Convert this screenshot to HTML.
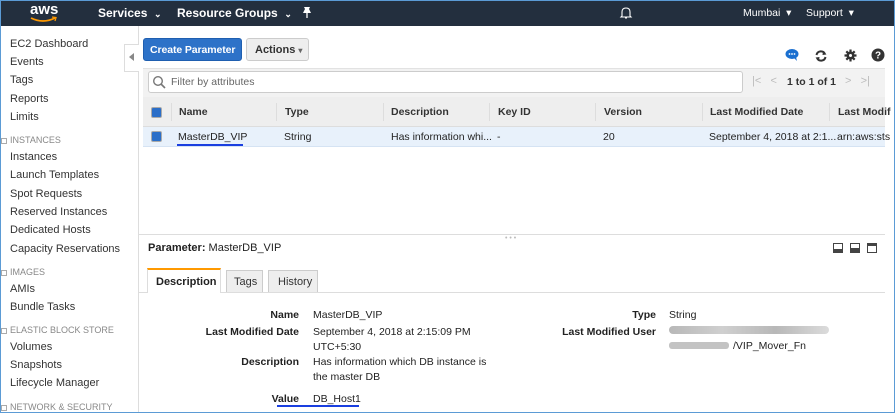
<!DOCTYPE html>
<html><head><meta charset="utf-8"><style>
*{box-sizing:border-box;margin:0;padding:0}
body{width:895px;height:413px;overflow:hidden;background:#fff;font-family:"Liberation Sans",Arial,sans-serif;font-size:11px;color:#222;position:relative}
.a{position:absolute;white-space:nowrap}
.frame{position:absolute;left:0;top:0;width:895px;height:413px;border:1px solid #5b9bd5;pointer-events:none}
.nav{left:0;top:0;width:895px;height:26px;background:#232f3e}
.nt{color:#fff;font-weight:bold;font-size:12px}
.sb{left:10px;font-size:11px;color:#333}
.sh{left:10px;font-size:9px;color:#888}
.sq{left:1px;width:6px;height:6px;border:1px solid #aaa;background:#fff}
.th{font-weight:bold;font-size:10.5px;color:#333}
.sep{width:1px;height:18px;background:#ddd;top:103px}
.lbl{font-weight:bold;text-align:right;font-size:10.5px}
.val{font-size:10.5px}
</style></head><body>
<div class="a nav"></div>
<div class="a" style="left:30px;top:1px;color:#fff;font-size:15px;font-weight:bold">aws</div>
<svg class="a" style="left:29px;top:15px" width="30" height="8"><path d="M2 3 Q14 9 26 3" stroke="#f90" stroke-width="1.8" fill="none"/><path d="M23 2 L27 2.5 L26 6" stroke="#f90" stroke-width="1.3" fill="none"/></svg>
<div class="a nt" style="left:98px;top:6px">Services&nbsp; <span style="font-size:9px">⌄</span></div>
<div class="a nt" style="left:177px;top:6px">Resource Groups&nbsp; <span style="font-size:9px">⌄</span></div>
<svg class="a" style="left:301px;top:6px" width="12" height="13"><path d="M3 1 L9 1 L8 3 L10 7 L2 7 L4 3 Z" fill="#fff"/><path d="M6 7 L6 12" stroke="#fff" stroke-width="1.3"/></svg>
<svg class="a" style="left:619px;top:6px" width="14" height="14"><path d="M3 10 L3 6 Q3 2 7 2 Q11 2 11 6 L11 10 L12 11 L2 11 Z M6 12 L8 12" stroke="#fff" fill="none" stroke-width="1.1"/></svg>
<div class="a" style="left:743px;top:7px;color:#fff;font-size:10.5px">Mumbai &nbsp;▾</div>
<div class="a" style="left:806px;top:7px;color:#fff;font-size:10.5px">Support &nbsp;▾</div>

<div class="a" style="left:138px;top:26px;width:1px;height:387px;background:#ddd"></div>
<div class="a" style="left:124px;top:44px;width:15px;height:28px;background:#fff;border:1px solid #ddd;border-right:none"></div>
<div class="a" style="left:129px;top:53px;width:0;height:0;border-top:4px solid transparent;border-bottom:4px solid transparent;border-right:5px solid #888"></div>

<div class="a sb" style="top:38px">EC2 Dashboard</div>
<div class="a sb" style="top:56px">Events</div>
<div class="a sb" style="top:74px">Tags</div>
<div class="a sb" style="top:93px">Reports</div>
<div class="a sb" style="top:111px">Limits</div>
<div class="a sq" style="top:138px"></div><div class="a sh" style="top:135px">INSTANCES</div>
<div class="a sb" style="top:151px">Instances</div>
<div class="a sb" style="top:169px">Launch Templates</div>
<div class="a sb" style="top:188px">Spot Requests</div>
<div class="a sb" style="top:206px">Reserved Instances</div>
<div class="a sb" style="top:224px">Dedicated Hosts</div>
<div class="a sb" style="top:243px">Capacity Reservations</div>
<div class="a sq" style="top:270px"></div><div class="a sh" style="top:267px">IMAGES</div>
<div class="a sb" style="top:283px">AMIs</div>
<div class="a sb" style="top:301px">Bundle Tasks</div>
<div class="a sq" style="top:328px"></div><div class="a sh" style="top:325px">ELASTIC BLOCK STORE</div>
<div class="a sb" style="top:341px">Volumes</div>
<div class="a sb" style="top:359px">Snapshots</div>
<div class="a sb" style="top:377px">Lifecycle Manager</div>
<div class="a sq" style="top:405px"></div><div class="a sh" style="top:402px">NETWORK &amp; SECURITY</div>

<div class="a" style="left:143px;top:38px;width:99px;height:23px;background:#2d72c8;border-radius:3px;border:1px solid #1f5fb0;color:#fff;font-weight:bold;font-size:10.5px;padding:5px 0 0 6px;letter-spacing:-0.1px">Create Parameter</div>
<div class="a" style="left:246px;top:38px;width:63px;height:23px;background:#eee;border-radius:3px;border:1px solid #ccc;font-weight:bold;font-size:11px;color:#333;padding:5px 0 0 8px">Actions <span style="font-size:8px;color:#666">▾</span></div>

<svg class="a" style="left:785px;top:48px" width="15" height="14"><ellipse cx="7" cy="6" rx="6.5" ry="5" fill="#1a6fd0"/><path d="M9 10 L12 13 L11 9 Z" fill="#1a6fd0"/><circle cx="4.5" cy="6" r=".9" fill="#fff"/><circle cx="7" cy="6" r=".9" fill="#fff"/><circle cx="9.5" cy="6" r=".9" fill="#fff"/></svg>
<svg class="a" style="left:814px;top:49px" width="14" height="14"><path d="M2.5 6 A4.5 4.5 0 0 1 11 5" stroke="#333" stroke-width="2" fill="none"/><path d="M11.5 8 A4.5 4.5 0 0 1 3 9" stroke="#333" stroke-width="2" fill="none"/><path d="M9 2 L12.5 5.5 L8.5 6 Z M5 12 L1.5 8.5 L5.5 8 Z" fill="#333"/></svg>
<svg class="a" style="left:844px;top:49px" width="13" height="13"><circle cx="6.5" cy="6.5" r="4" fill="#333"/><path d="M6.5 0.5 V12.5 M0.5 6.5 H12.5 M2.3 2.3 L10.7 10.7 M10.7 2.3 L2.3 10.7" stroke="#333" stroke-width="2.2"/><circle cx="6.5" cy="6.5" r="1.5" fill="#fff"/></svg>
<svg class="a" style="left:871px;top:48px" width="14" height="14"><circle cx="7" cy="7" r="6.5" fill="#333"/><text x="7" y="10.5" text-anchor="middle" fill="#fff" font-size="10" font-weight="bold" font-family="Liberation Sans">?</text></svg>

<div class="a" style="left:143px;top:68px;width:742px;height:29px;background:#f2f2f2;border-top:1px solid #e2e2e2"></div>
<div class="a" style="left:148px;top:71px;width:595px;height:22px;background:#fff;border:1px solid #ccc;border-radius:3px"></div>
<svg class="a" style="left:152px;top:75px" width="14" height="14"><circle cx="6" cy="6" r="4.3" stroke="#777" stroke-width="1.4" fill="none"/><path d="M9 9 L13 13" stroke="#777" stroke-width="1.6"/></svg>
<div class="a" style="left:171px;top:76px;color:#666;font-size:10.5px">Filter by attributes</div>
<div class="a" style="left:752px;top:75px;color:#bbb;font-size:11px">|&lt;&nbsp;&nbsp; &lt;</div>
<div class="a" style="left:787px;top:76px;font-weight:bold;font-size:10.5px;color:#333">1 to 1 of 1</div>
<div class="a" style="left:845px;top:75px;color:#bbb;font-size:11px">&gt;&nbsp;&nbsp; &gt;|</div>

<div class="a" style="left:143px;top:97px;width:742px;height:30px;background:#eee;border-bottom:1px solid #ddd"></div>
<div class="a" style="left:143px;top:127px;width:742px;height:20px;background:#e8f1fb;border-bottom:1px solid #d5e3f3"></div>
<div class="a" style="left:151px;top:107px;width:11px;height:11px;background:#2a6ec8;border:1px solid #aaa;border-radius:2px"></div>
<div class="a" style="left:151px;top:131px;width:11px;height:11px;background:#2a6ec8;border:1px solid #aaa;border-radius:2px"></div>
<div class="a sep" style="left:171px"></div><div class="a sep" style="left:276px"></div><div class="a sep" style="left:383px"></div><div class="a sep" style="left:489px"></div><div class="a sep" style="left:595px"></div><div class="a sep" style="left:702px"></div><div class="a sep" style="left:829px"></div>
<div class="a th" style="left:179px;top:106px">Name</div>
<div class="a th" style="left:285px;top:106px">Type</div>
<div class="a th" style="left:391px;top:106px">Description</div>
<div class="a th" style="left:498px;top:106px">Key ID</div>
<div class="a th" style="left:604px;top:106px">Version</div>
<div class="a th" style="left:710px;top:106px">Last Modified Date</div>
<div class="a th" style="left:838px;top:106px">Last Modif</div>
<div class="a val" style="left:178px;top:131px">MasterDB_VIP</div>
<div class="a" style="left:177px;top:144px;width:66px;height:2px;background:#1a3fe0"></div>
<div class="a val" style="left:284px;top:131px">String</div>
<div class="a val" style="left:391px;top:131px">Has information whi...</div>
<div class="a val" style="left:497px;top:131px">-</div>
<div class="a val" style="left:603px;top:131px">20</div>
<div class="a val" style="left:709px;top:131px">September 4, 2018 at 2:1...</div>
<div class="a val" style="left:837px;top:131px">arn:aws:sts</div>

<div class="a" style="left:139px;top:234px;width:746px;height:1px;background:#ddd"></div>
<div class="a" style="left:505px;top:235px;color:#bbb;font-size:7px">• • •</div>
<div class="a" style="left:148px;top:242px;font-size:11px"><b>Parameter:</b> MasterDB_VIP</div>
<div class="a" style="left:833px;top:243px;width:10px;height:10px;border:1px solid #444;border-bottom:4px solid #444;background:#fff"></div>
<div class="a" style="left:850px;top:243px;width:10px;height:10px;border:1px solid #444;border-bottom:5px solid #444;background:#fff"></div>
<div class="a" style="left:867px;top:243px;width:10px;height:10px;border:1px solid #444;border-top:3px solid #444;background:#fff"></div>

<div class="a" style="left:139px;top:292px;width:746px;height:1px;background:#ddd"></div>
<div class="a" style="left:147px;top:268px;width:74px;height:25px;background:#fff;border:1px solid #ddd;border-top:2px solid #f90;border-bottom:none;font-weight:bold;font-size:11px;padding:6px 0 0 8px">Description</div>
<div class="a" style="left:226px;top:270px;width:37px;height:22px;background:#eee;border:1px solid #ccc;border-bottom:none;font-size:11px;padding:5px 0 0 7px;color:#333">Tags</div>
<div class="a" style="left:268px;top:270px;width:50px;height:22px;background:#eee;border:1px solid #ccc;border-bottom:none;font-size:11px;padding:5px 0 0 9px;color:#333">History</div>

<div class="a lbl" style="right:596px;top:309px">Name</div>
<div class="a lbl" style="right:596px;top:326px">Last Modified Date</div>
<div class="a lbl" style="right:596px;top:356px">Description</div>
<div class="a lbl" style="right:596px;top:393px">Value</div>
<div class="a" style="left:277px;top:405px;width:82px;height:2px;background:#1a3fe0"></div>
<div class="a val" style="left:313px;top:309px">MasterDB_VIP</div>
<div class="a val" style="left:313px;top:326px">September 4, 2018 at 2:15:09 PM</div>
<div class="a val" style="left:313px;top:341px">UTC+5:30</div>
<div class="a val" style="left:313px;top:356px">Has information which DB instance is</div>
<div class="a val" style="left:313px;top:371px">the master DB</div>
<div class="a val" style="left:313px;top:393px">DB_Host1</div>
<div class="a lbl" style="right:239px;top:309px">Type</div>
<div class="a lbl" style="right:239px;top:326px">Last Modified User</div>
<div class="a val" style="left:669px;top:309px">String</div>
<div class="a" style="left:669px;top:326px;width:160px;height:8px;background:linear-gradient(90deg,#999,#bbb,#999,#ccc);border-radius:4px;opacity:.7"></div>
<div class="a" style="left:669px;top:342px;width:60px;height:7px;background:#aaa;border-radius:3px;opacity:.7"></div>
<div class="a val" style="left:733px;top:340px">/VIP_Mover_Fn</div>

<div class="frame"></div>
</body></html>
